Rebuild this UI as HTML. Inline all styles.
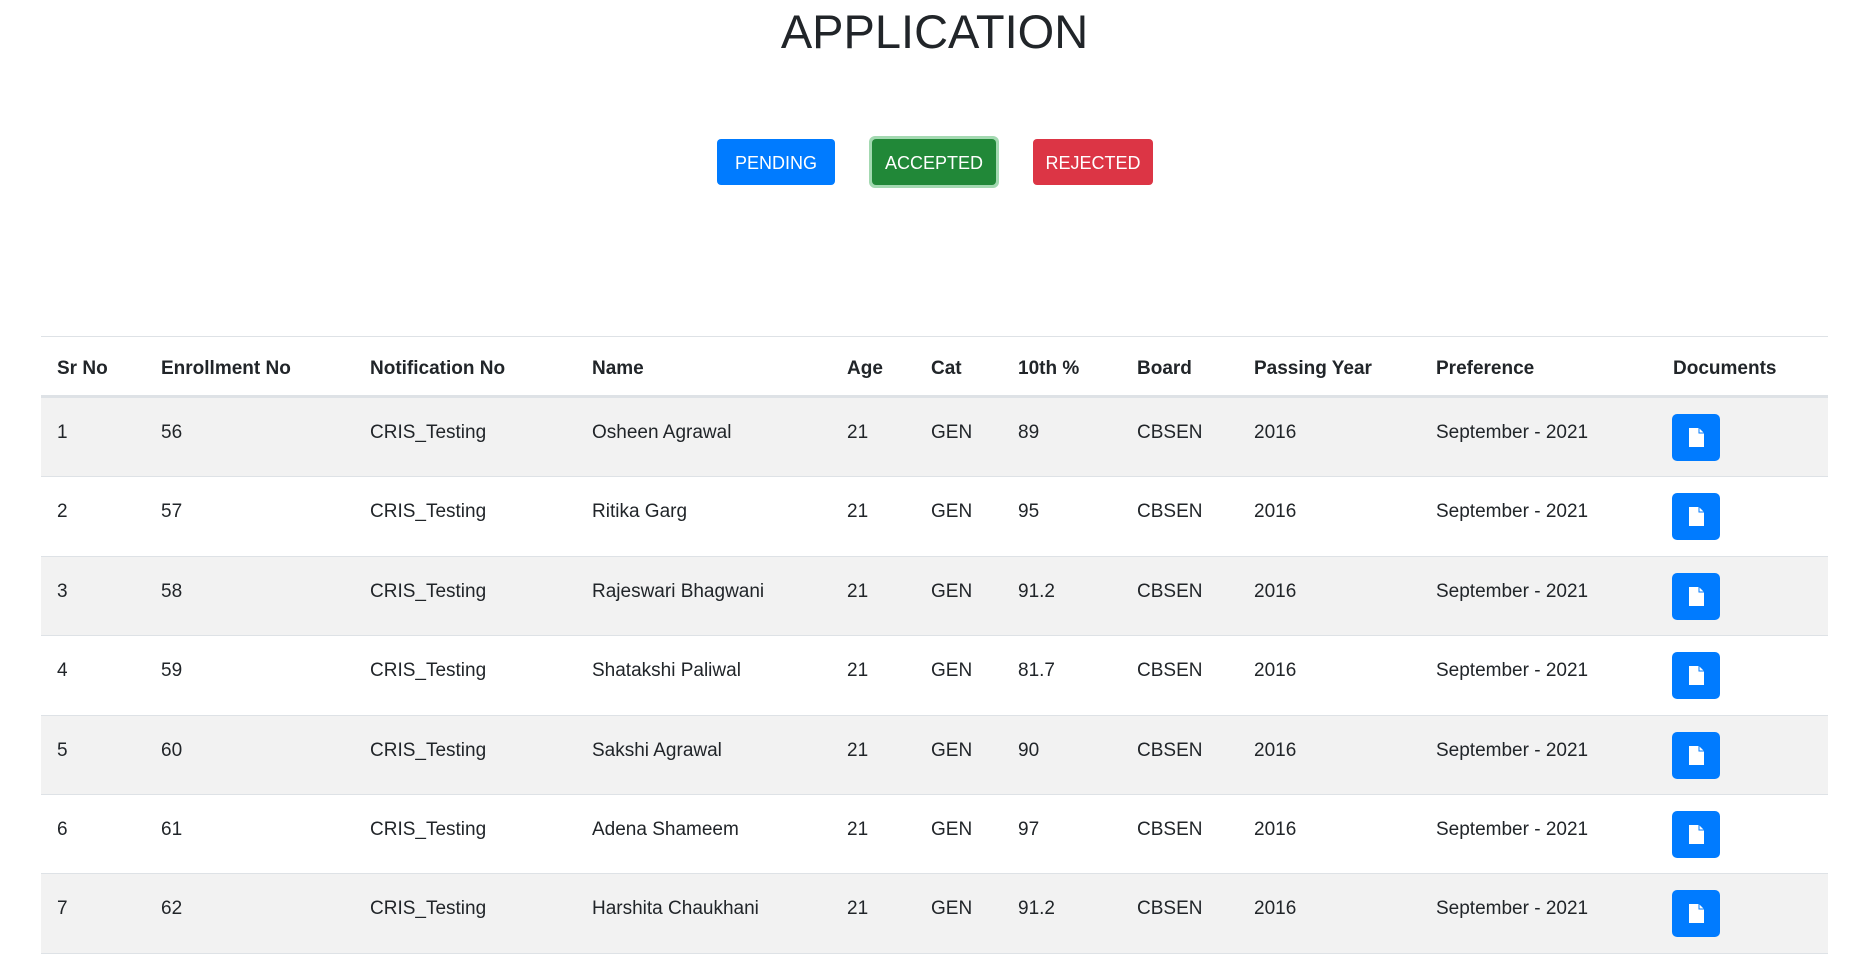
<!DOCTYPE html>
<html><head><meta charset="utf-8"><style>
*{margin:0;padding:0;box-sizing:border-box}
body{width:1859px;height:957px;overflow:hidden;background:#fff;font-family:"Liberation Sans",sans-serif;color:#212529}
h1{position:absolute;left:0;width:1869px;text-align:center;top:4px;font-size:47px;font-weight:400}
.btn{position:absolute;top:139px;height:46px;color:#fff;font-size:18px;line-height:48px;text-align:center;border-radius:4px}
.tbl{position:absolute;left:41px;width:1787px;top:336px;border-top:1px solid #dee2e6}
.row{position:relative;height:79.4px;border-bottom:1px solid #dee2e6}
.row.h{height:61px;border-bottom:3px solid #dee2e6;font-weight:700}
.row.o{background:#f2f2f2}
.row span{position:absolute;font-size:19px;top:24px}
.row.h span{top:21px}
.doc{position:absolute;left:1631px;top:16px;width:48px;height:47px;background:#007bff;border-radius:5px}
</style></head><body>
<h1>APPLICATION</h1>
<div class="btn" style="left:717px;width:118px;background:#007bff">PENDING</div>
<div class="btn" style="left:869px;width:130px;top:136px;height:52px;background:#a3d9b1;border-radius:6px"></div>
<div class="btn" style="left:872px;width:124px;background:#218838">ACCEPTED</div>
<div class="btn" style="left:1033px;width:120px;background:#dc3545">REJECTED</div>
<div class="tbl">
<div class="row h"><span style="left:16px">Sr No</span><span style="left:120px">Enrollment No</span><span style="left:329px">Notification No</span><span style="left:551px">Name</span><span style="left:806px">Age</span><span style="left:890px">Cat</span><span style="left:977px">10th %</span><span style="left:1096px">Board</span><span style="left:1213px">Passing Year</span><span style="left:1395px">Preference</span><span style="left:1632px">Documents</span></div>
<div id="rows"></div>
</div>
<script>
var d=[["1","56","Osheen Agrawal","89"],["2","57","Ritika Garg","95"],["3","58","Rajeswari Bhagwani","91.2"],["4","59","Shatakshi Paliwal","81.7"],["5","60","Sakshi Agrawal","90"],["6","61","Adena Shameem","97"],["7","62","Harshita Chaukhani","91.2"]];
var h="";
d.forEach(function(r,i){h+='<div class="row'+(i%2==0?' o':'')+'"><span style="left:16px">'+r[0]+'</span><span style="left:120px">'+r[1]+'</span><span style="left:329px">CRIS_Testing</span><span style="left:551px">'+r[2]+'</span><span style="left:806px">21</span><span style="left:890px">GEN</span><span style="left:977px">'+r[3]+'</span><span style="left:1096px">CBSEN</span><span style="left:1213px">2016</span><span style="left:1395px">September - 2021</span><div class="doc"><svg width="48" height="47" viewBox="0 0 48 47"><path d="M17 14h10l5 5v14H17z" fill="#fff"/><path d="M27 14v5h5" fill="none" stroke="#007bff" stroke-width="1"/></svg></div></div>';});
document.getElementById("rows").innerHTML=h;
</script>
</body></html>
